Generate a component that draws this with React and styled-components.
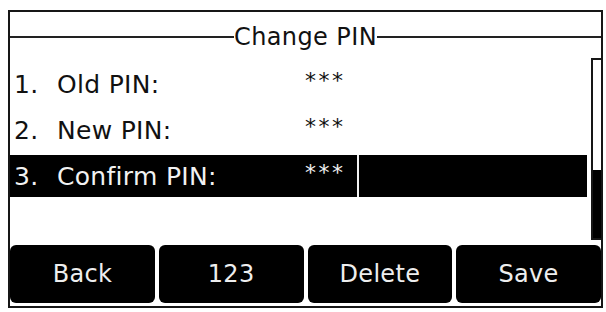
import React from "react";
import styled, { createGlobalStyle } from "styled-components";

const GlobalStyle = createGlobalStyle`
  html, body {
    margin: 0;
    padding: 0;
    background: #ffffff;
  }
  body {
    font-family: "DejaVu Sans", "Liberation Sans", sans-serif;
    color: #111111;
  }
`;

const Screen = styled.div`
  box-sizing: border-box;
  width: 595px;
  height: 298px;
  margin: 10px 0 0 8px;
  border: 2px solid #161616;
  display: flex;
  flex-direction: column;
`;

const Header = styled.div`
  height: 49px;
  display: flex;
  align-items: center;
  flex-shrink: 0;
`;

const Rule = styled.div`
  flex: 1;
  height: 2px;
  background: #222;
`;

const Title = styled.div`
  font-size: 24px;
  line-height: 28px;
  letter-spacing: 0.4px;
`;

const Body = styled.div`
  height: 184px;
  display: flex;
  flex-shrink: 0;
`;

const List = styled.div`
  flex: 1;
  padding-right: 4px;
  display: flex;
  flex-direction: column;
`;

const Row = styled.div`
  height: 46px;
  display: flex;
  align-items: stretch;
  padding: 2px 0;
  box-sizing: border-box;
`;

const RowBody = styled.div`
  flex: 1;
  display: flex;
  align-items: center;
  background: ${(p) => (p.selected ? "#000" : "transparent")};
  color: ${(p) => (p.selected ? "#f2f2f2" : "#111")};
  font-size: 25px;
  letter-spacing: 0.3px;
`;

const Num = styled.span`
  width: 43px;
  padding-left: 4px;
`;

const Label = styled.span`
  width: 248px;
`;

const Value = styled.span`
  width: 52px;
  font-size: 22px;
  letter-spacing: 2.5px;
  margin-top: -8px;
`;

const Divider = styled.div`
  width: 2px;
  align-self: stretch;
  background: ${(p) => (p.selected ? "#f2f2f2" : "transparent")};
`;

const Track = styled.div`
  box-sizing: border-box;
  width: 10px;
  margin: -3px 0 5px 0;
  border: 2px solid #161616;
  border-right: none;
  background: #000;
  display: flex;
  flex-direction: column;
`;

const Thumb = styled.div`
  height: 110px;
  background: #fff;
`;

const Softkeys = styled.div`
  height: 58px;
  display: grid;
  grid-template-columns: repeat(4, 1fr);
  gap: 4px;
  flex-shrink: 0;
`;

const Key = styled.div`
  background: #000;
  color: #eeeeee;
  border-radius: 6px;
  display: flex;
  align-items: center;
  justify-content: center;
  font-size: 24px;
  letter-spacing: 0.3px;
`;

const rows = [
  { num: "1.", label: "Old PIN:", value: "***" },
  { num: "2.", label: "New PIN:", value: "***" },
  { num: "3.", label: "Confirm PIN:", value: "***", selected: true },
];

const keys = ["Back", "123", "Delete", "Save"];

export default function App() {
  return (
    <>
      <GlobalStyle />
      <Screen>
        <Header>
          <Rule />
          <Title>Change PIN</Title>
          <Rule />
        </Header>
        <Body>
          <List>
            {rows.map((r) => (
              <Row key={r.num}>
                <RowBody selected={r.selected}>
                  <Num>{r.num}</Num>
                  <Label>{r.label}</Label>
                  <Value>{r.value}</Value>
                  <Divider selected={r.selected} />
                </RowBody>
              </Row>
            ))}
          </List>
          <Track>
            <Thumb />
          </Track>
        </Body>
        <Softkeys>
          {keys.map((k) => (
            <Key key={k}>{k}</Key>
          ))}
        </Softkeys>
      </Screen>
    </>
  );
}
